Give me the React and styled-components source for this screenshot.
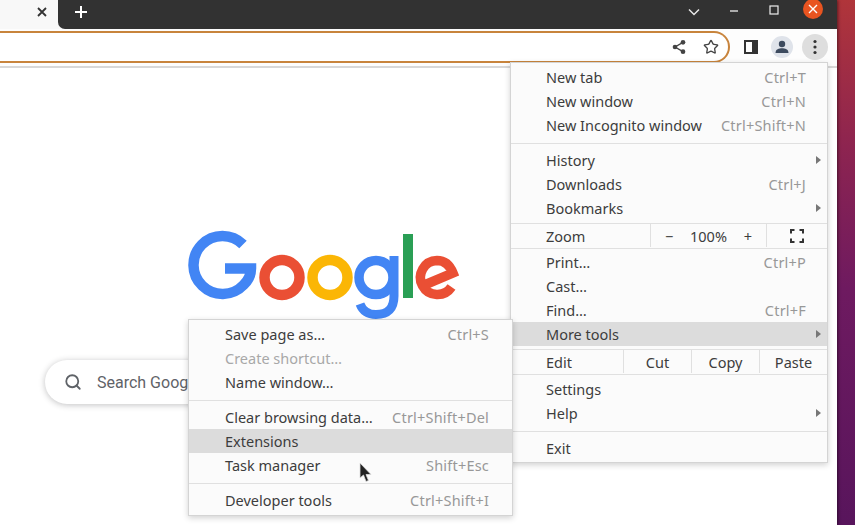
import React from 'react';
import styled, { createGlobalStyle } from 'styled-components';
import { Star, Search } from 'lucide-react';

const GlobalStyle = createGlobalStyle`
html, body {
    margin: 0;
    padding: 0;
    width: 855px;
    height: 525px;
    overflow: hidden;
    background: #fff;
}
* {
    box-sizing: border-box;
}
`

const mainTop = [
    { label: 'New tab', keys: 'Ctrl+T' },
    { label: 'New window', keys: 'Ctrl+N' },
    { label: 'New Incognito window', keys: 'Ctrl+Shift+N' },
];

const mainHistory = [
    { label: 'History', arrow: true },
    { label: 'Downloads', keys: 'Ctrl+J' },
    { label: 'Bookmarks', arrow: true },
];

const mainPrint = [
    { label: 'Print…', keys: 'Ctrl+P' },
    { label: 'Cast…' },
    { label: 'Find…', keys: 'Ctrl+F' },
    { label: 'More tools', arrow: true, active: true },
];

const mainSettings = [
    { label: 'Settings' },
    { label: 'Help', arrow: true },
];

const subSave = [
    { label: 'Save page as…', keys: 'Ctrl+S' },
    { label: 'Create shortcut…', disabled: true },
    { label: 'Name window…' },
];

const subClear = [
    { label: 'Clear browsing data…', keys: 'Ctrl+Shift+Del' },
    { label: 'Extensions', active: true },
    { label: 'Task manager', keys: 'Shift+Esc' },
];

function MenuRows({ items, inset }) {
    return items.map((item) => (
        <Row key={item.label} $active={item.active} $inset={inset}>
            <RowLabel $disabled={item.disabled}>{item.label}</RowLabel>
            {item.keys && <Keys>{item.keys}</Keys>}
            {item.arrow && <Arrow />}
        </Row>
    ));
}

function GoogleLogo() {
    return (
        <LogoSvg viewBox="0 0 275 92" aria-label="Google">
            {/* G */}
            <path d="M58 14.5 A29 29 0 1 0 58.5 55 Q66 48 66 38.5 H40" fill="none" stroke="#4285f4" strokeWidth="10.5" />
            {/* o o */}
            <circle cx="97" cy="47.5" r="17.5" fill="none" stroke="#ea4f34" strokeWidth="10.5" />
            <circle cx="145" cy="47.5" r="17.5" fill="none" stroke="#fbb605" strokeWidth="10.5" />
            {/* g */}
            <circle cx="191" cy="47.5" r="17" fill="none" stroke="#4285f4" strokeWidth="9.5" />
            <path d="M209 26 V66 Q209 84.5 191 84.5 Q179 84.5 175 74" fill="none" stroke="#4285f4" strokeWidth="9" />
            {/* l */}
            <rect x="218" y="4" width="10" height="64" fill="#2a9f55" />
            {/* e */}
            <path d="M237 56 L268 43 Q263 30.5 252 30.5 A17 17 0 1 0 266.5 57" fill="none" stroke="#ea4f34" strokeWidth="9.5" />
        </LogoSvg>
    );
}

function App() {
    return (
        <Desktop>
            <GlobalStyle />
            <Browser>
                <TitleBar>
                    <ActiveTab>
                        <svg width="12" height="12" viewBox="0 0 12 12">
                            <path d="M2 2 L10 10 M10 2 L2 10" stroke="#333" strokeWidth="1.8" />
                        </svg>
                    </ActiveTab>
                    <DarkStrip>
                        <NewTab>
                            <svg width="14" height="14" viewBox="0 0 14 14">
                                <path d="M7 1 V13 M1 7 H13" stroke="#fff" strokeWidth="2" />
                            </svg>
                        </NewTab>
                        <WindowControls>
                            <ControlSlot $y={2}>
                                <svg width="12" height="8" viewBox="0 0 12 8">
                                    <path d="M1 1.5 L6 6.5 L11 1.5" fill="none" stroke="#e8e8e8" strokeWidth="1.5" />
                                </svg>
                            </ControlSlot>
                            <ControlSlot $y={1}>
                                <svg width="10" height="4" viewBox="0 0 10 4">
                                    <path d="M1 2 H9" stroke="#eee" strokeWidth="1.3" />
                                </svg>
                            </ControlSlot>
                            <ControlSlot $y={0}>
                                <svg width="10" height="10" viewBox="0 0 10 10">
                                    <rect x="1" y="1" width="8" height="8" fill="none" stroke="#eee" strokeWidth="1.2" />
                                </svg>
                            </ControlSlot>
                            <CloseButton>
                                <svg width="10" height="10" viewBox="0 0 10 10">
                                    <path d="M1 1 L9 9 M9 1 L1 9" stroke="#fff" strokeWidth="1.4" />
                                </svg>
                            </CloseButton>
                        </WindowControls>
                    </DarkStrip>
                </TitleBar>
                <Toolbar>
                    <Omnibox>
                        <svg width="16" height="16" viewBox="0 0 24 24">
                            <circle cx="18" cy="5" r="3.5" fill="#444" />
                            <circle cx="6" cy="12" r="3.5" fill="#444" />
                            <circle cx="18" cy="19" r="3.5" fill="#444" />
                            <path d="M18 5 L6 12 L18 19" fill="none" stroke="#444" strokeWidth="2" />
                        </svg>
                        <Star size={16} color="#444" strokeWidth={2} />
                    </Omnibox>
                    <ToolButton>
                        <svg width="14" height="14" viewBox="0 0 14 14">
                            <rect x="1" y="1" width="12" height="12" fill="none" stroke="#333" strokeWidth="2" />
                            <rect x="8" y="1" width="5" height="12" fill="#333" />
                        </svg>
                    </ToolButton>
                    <ProfileButton>
                        <svg width="14" height="14" viewBox="0 0 14 14">
                            <circle cx="7" cy="4" r="3.2" fill="#3c4a5e" />
                            <path d="M0.5 13 C0.5 9 4 8.2 7 8.2 C10 8.2 13.5 9 13.5 13 Z" fill="#3c4a5e" />
                        </svg>
                    </ProfileButton>
                    <MenuButton>
                        <svg width="4" height="16" viewBox="0 0 4 16">
                            <circle cx="2" cy="2.5" r="1.6" fill="#333" />
                            <circle cx="2" cy="8" r="1.6" fill="#333" />
                            <circle cx="2" cy="13.5" r="1.6" fill="#333" />
                        </svg>
                    </MenuButton>
                </Toolbar>
                <Page>
                    <GoogleLogo />
                    <SearchBox>
                        <Search size={18} color="#5f6368" strokeWidth={2.4} />
                        <SearchText>Search Goog</SearchText>
                    </SearchBox>
                </Page>

                <MainMenu>
                    <MenuRows items={mainTop} />
                    <Separator />
                    <MenuRows items={mainHistory} />
                    <SplitRow $top={3} $bottom={1}>
                        <SplitLabel>Zoom</SplitLabel>
                        <ZoomControls>
                            <span>−</span>
                            <span>100%</span>
                            <span>+</span>
                        </ZoomControls>
                        <FullscreenCell>
                            <svg width="14" height="14" viewBox="0 0 14 14">
                                <path d="M1 4.5 V1 H4.5 M9.5 1 H13 V4.5 M13 9.5 V13 H9.5 M4.5 13 H1 V9.5" fill="none" stroke="#333" strokeWidth="2" />
                            </svg>
                        </FullscreenCell>
                    </SplitRow>
                    <MenuRows items={mainPrint} />
                    <SplitRow $top={3} $bottom={2}>
                        <SplitLabel>Edit</SplitLabel>
                        <EditCell>Cut</EditCell>
                        <EditCell>Copy</EditCell>
                        <EditCell>Paste</EditCell>
                    </SplitRow>
                    <MenuRows items={mainSettings} />
                    <Separator />
                    <MenuRows items={[{ label: 'Exit' }]} />
                </MainMenu>

                <SubMenu>
                    <MenuRows items={subSave} inset />
                    <Separator />
                    <MenuRows items={subClear} inset />
                    <Separator />
                    <MenuRows items={[{ label: 'Developer tools', keys: 'Ctrl+Shift+I' }]} inset />
                </SubMenu>

                <Cursor width="14" height="21" viewBox="0 0 14 21">
                    <path d="M1 1 V16 L4.5 13 L7 19.5 L9.5 18.5 L7 12.5 H12 Z" fill="#222" stroke="#ddd" strokeWidth="0.8" />
                </Cursor>
            </Browser>
        </Desktop>
    );
}

const Desktop = styled.div`
width: 855px;
height: 525px;
overflow: hidden;
display: flex;
background: linear-gradient(180deg, #b0353a 0%, #8d2450 28%, #6e1a60 55%, #58155c 100%);
font-family: "Noto Sans", "Open Sans", sans-serif;
`

const Browser = styled.div`
position: relative;
width: 837px;
height: 525px;
display: flex;
flex-direction: column;
background: #fff;
box-shadow: 1px 0 3px rgba(0, 0, 0, 0.5);
`

const TitleBar = styled.div`
height: 29px;
flex-shrink: 0;
display: flex;
background: #f8f8f8;
`

const ActiveTab = styled.div`
width: 58px;
display: flex;
align-items: center;
justify-content: flex-end;
padding: 0 10px 5px 0;
`

const DarkStrip = styled.div`
flex: 1;
display: flex;
background: #323232;
border-bottom-left-radius: 7px;
`

const NewTab = styled.div`
width: 46px;
display: flex;
align-items: center;
justify-content: center;
padding-bottom: 5px;
`

const WindowControls = styled.div`
margin-left: auto;
display: flex;
align-items: flex-start;
padding-right: 14px;
`

const ControlSlot = styled.div`
width: 40px;
height: 20px;
margin-top: ${(p) => p.$y}px;
display: flex;
align-items: center;
justify-content: center;
`

const CloseButton = styled.div`
width: 20px;
height: 20px;
margin: -1px 0 0 9px;
border-radius: 50%;
background: #e95420;
display: flex;
align-items: center;
justify-content: center;
`

const Toolbar = styled.div`
height: 39px;
flex-shrink: 0;
display: flex;
align-items: center;
padding: 3px 9px 4px 0;
background: #fdfdfd;
border-bottom: 2px solid #d8d8d8;
`

const Omnibox = styled.div`
width: 730px;
height: 32px;
display: flex;
align-items: center;
justify-content: flex-end;
gap: 16px;
padding-right: 9px;
background: #fff;
border: 2px solid #c8843c;
border-left: none;
border-radius: 0 16px 16px 0;
`

const ToolButton = styled.div`
width: 14px;
height: 14px;
margin-left: 14px;
display: flex;
`

const ProfileButton = styled.div`
width: 22px;
height: 22px;
margin-left: 13px;
border-radius: 50%;
background: #dfe3ea;
display: flex;
align-items: center;
justify-content: center;
`

const MenuButton = styled.div`
width: 26px;
height: 26px;
margin-left: 9px;
border-radius: 50%;
background: #dedede;
display: flex;
align-items: center;
justify-content: center;
`

const Page = styled.div`
width: 645px;
flex: 1;
display: flex;
flex-direction: column;
align-items: center;
padding-top: 162px;
`

const LogoSvg = styled.svg`
width: 275px;
height: 92px;
flex-shrink: 0;
`

const SearchBox = styled.div`
width: 555px;
height: 44px;
margin-top: 38px;
display: flex;
align-items: center;
gap: 15px;
padding-left: 19px;
border-radius: 22px;
background: #fff;
box-shadow: 0 1px 6px rgba(32, 33, 36, 0.28);
`

const SearchText = styled.span`
font-family: Roboto, sans-serif;
font-size: 16px;
color: #5f6368;
`

const MenuPanel = styled.div`
position: absolute;
background: #fbfbfb;
border: 1px solid #d4d4d4;
box-shadow: 0 2px 6px rgba(0, 0, 0, 0.18);
padding-top: 2px;
font-size: 14.5px;
color: #3d3d3d;
`

const MainMenu = styled(MenuPanel)`
left: 510px;
top: 62px;
width: 318px;
height: 401px;
`

const SubMenu = styled(MenuPanel)`
left: 188px;
top: 319px;
width: 325px;
height: 197px;
`

const Row = styled.div`
height: 24px;
display: flex;
align-items: center;
position: relative;
padding: 0 ${(p) => (p.$inset ? 23 : 21)}px 0 ${(p) => (p.$inset ? 36 : 35)}px;
background: ${(p) => (p.$active ? '#dcdcdc' : 'transparent')};
`

const RowLabel = styled.span`
color: ${(p) => (p.$disabled ? '#a8a8a8' : '#3d3d3d')};
`

const Keys = styled.span`
margin-left: auto;
color: #989898;
letter-spacing: 0.2px;
`

const Arrow = styled.span`
position: absolute;
right: 6px;
top: 8px;
width: 0;
height: 0;
border-left: 5px solid #777;
border-top: 4px solid transparent;
border-bottom: 4px solid transparent;
`

const Separator = styled.div`
height: 1px;
margin: 6px 0 4px;
background: #e0e0e0;
`

const SplitRow = styled.div`
height: 26px;
margin: ${(p) => p.$top}px 0 ${(p) => p.$bottom}px;
padding-bottom: 1px;
display: flex;
align-items: stretch;
border-top: 1px solid #e0e0e0;
border-bottom: 1px solid #e0e0e0;
`

const SplitLabel = styled.span`
flex: 1;
display: flex;
align-items: center;
padding-left: 35px;
`

const ZoomControls = styled.div`
width: 116px;
display: flex;
align-items: center;
justify-content: space-between;
padding: 0 14px;
border-left: 1px solid #e0e0e0;
`

const FullscreenCell = styled.div`
width: 61px;
display: flex;
align-items: center;
justify-content: center;
border-left: 1px solid #e0e0e0;
`

const EditCell = styled.div`
width: 68px;
display: flex;
align-items: center;
justify-content: center;
border-left: 1px solid #e0e0e0;
`

const Cursor = styled.svg`
position: absolute;
left: 359px;
top: 462px;
`

export default App;
